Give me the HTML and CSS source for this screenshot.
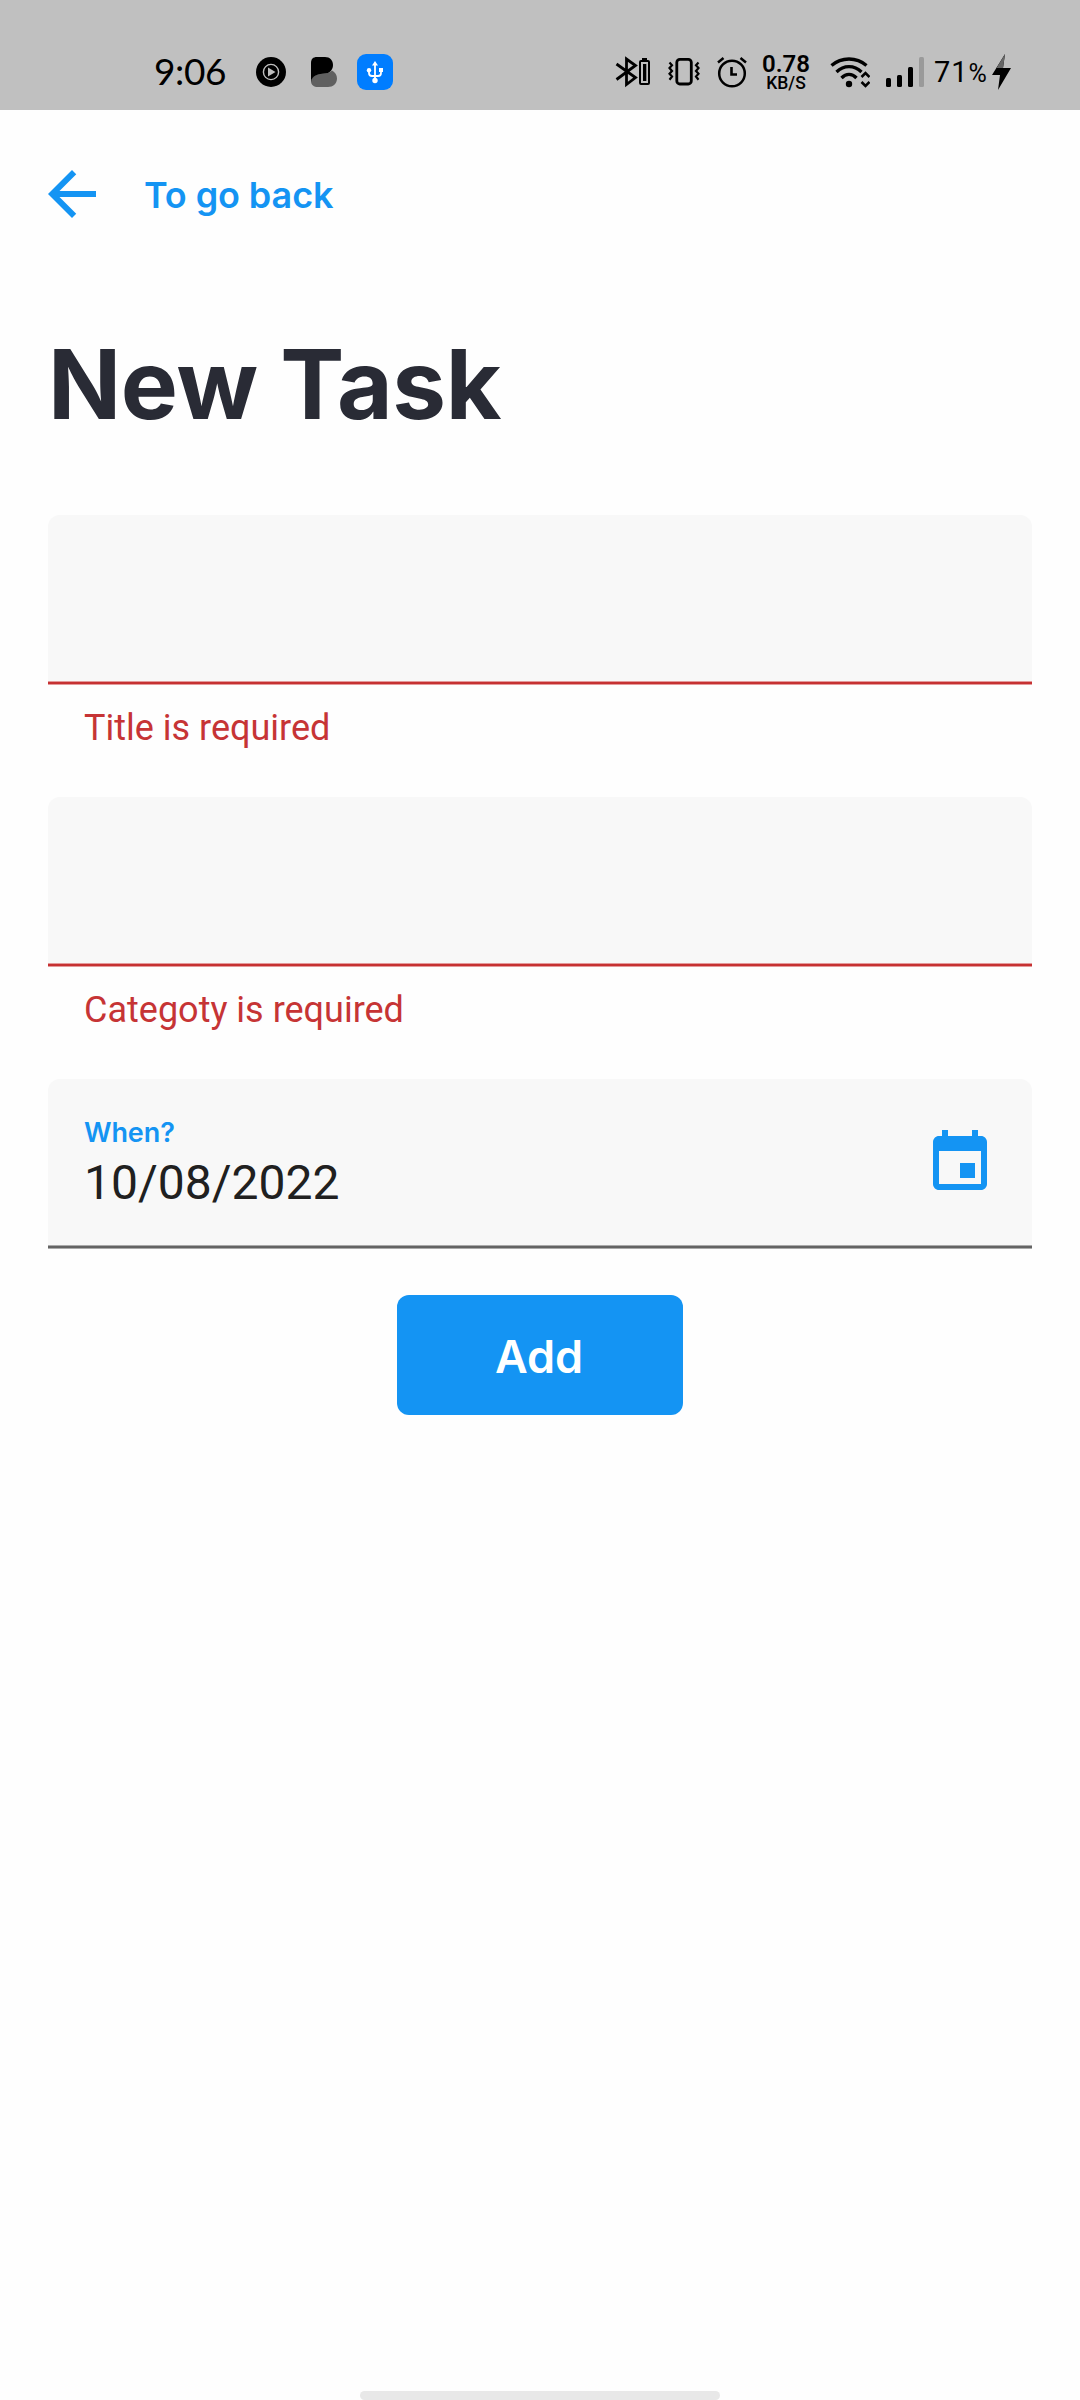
FILE: index.html
```html
<!DOCTYPE html>
<html lang="en">
<head>
<meta charset="utf-8">
<title>New Task</title>
<link rel="stylesheet" href="styles.css">
</head>
<body>
<div class="screen">
  <header class="status">
    <div class="status-left">
      <span class="clock">9:06</span>
      <svg class="icon-play" width="30" height="30" viewBox="0 0 30 30"><circle cx="15" cy="15" r="15"/><circle cx="15" cy="15" r="7.6" fill="none" stroke="#c0c0c0" stroke-width="1.4"/><path d="M12 10.5v9l7.5-4.5z" fill="#c0c0c0"/></svg>
      <svg class="icon-b" width="26" height="30" viewBox="0 0 26 30"><path d="M0 24C1 17 9 17 14 16.500C18 16 20 14.500 21 13.500C24 15 26 18 26 21.500C26 26.500 22 30 17 30H7C3 30 0 28 0 24z" fill="#606060"/><path d="M0 25V6C0 2 2 0 6 0H14C19 0 22 3.500 22 8C22 13.500 18 16.300 14 16.600C8 17 1 18 0 25z"/></svg>
      <svg width="36" height="36" viewBox="0 0 36 36"><rect width="36" height="36" rx="9" fill="#007dff"/><g fill="none" stroke="#fff" stroke-width="1.800"><path d="M18 9V26M12 17V19Q12 22 15 22H21Q24 22 24 19V17"/></g><path d="M18 7l3 4.500h-6z" fill="#fff"/><circle cx="12" cy="16.300" r="2.200" fill="#fff"/><path d="M22 14h4v4h-4z" fill="#fff"/><circle cx="18" cy="26.500" r="2.700" fill="#fff"/></svg>
    </div>
    <div class="status-right">
      <svg class="icon-bt" width="36" height="32" viewBox="0 0 36 32"><path d="M1.500 8L20.500 21.500L11.500 28.500V3L20.500 9.500L1.500 23.500" fill="none" stroke="#000" stroke-width="2.800"/><rect x="25" y="5" width="9" height="23" rx="1" fill="none" stroke="#000" stroke-width="2"/><path d="M27 2h5v3h-5zM28 8h3.300v17H28z"/></svg>
      <svg class="icon-vib" width="32" height="30" viewBox="0 0 32 30"><rect x="8.800" y="2.300" width="14.500" height="24.700" rx="3" fill="none" stroke="#000" stroke-width="2.800"/><path d="M1.500 5.500l2.500 2.800l-2.500 2.800l2.500 2.800l-2.500 2.800l2.500 2.800l-2.500 3.200M30.500 5.500l-2.500 2.800l2.500 2.800l-2.500 2.800l2.500 2.800l-2.500 2.800l2.500 3.200" fill="none" stroke="#000" stroke-width="2.200"/></svg>
      <svg class="icon-alarm" width="30" height="32" viewBox="0 0 30 32"><g fill="none" stroke="#000" stroke-width="2.500"><circle cx="15" cy="16.500" r="12.800"/><path d="M1 5.500L6.500 1M29 5.500L23.500 1"/><path d="M14.500 10V17.500H20" stroke-width="2.600"/></g></svg>
      <div class="speed"><span class="speed-value">0.78</span><span class="speed-unit">KB/S</span></div>
      <svg class="icon-wifi" width="40" height="32" viewBox="0 0 40 32"><g fill="none" stroke="#000" stroke-width="3.300"><path d="M1.500 9.500Q9 3 19 3T36.500 9.500"/><path d="M6.500 16Q12 10.600 19 10.600T31.500 16"/><path d="M11.500 22Q15 18.300 19 18.300T26.500 22"/></g><circle cx="19" cy="28" r="3.200"/><path d="M31.500 21l4-4l4 4M31.500 26l4 4l4-4" fill="none" stroke="#000" stroke-width="2.600"/></svg>
      <svg class="icon-signal" width="38" height="30" viewBox="0 0 38 30"><rect x="0" y="21" width="5" height="9" rx="1.500"/><rect x="11" y="18" width="5" height="12" rx="1.500"/><rect x="22" y="10" width="5" height="20" rx="1.500"/><rect x="33" y="0" width="5" height="30" rx="1.500" fill="#9a9a9a"/></svg>
      <span class="battery">71<span class="percent">%</span></span>
      <svg class="icon-bolt" width="19" height="36" viewBox="0 0 19 36"><path d="M13 0L0 21H8L6 36L19 14H11z"/><path d="M13 0L4.500 14H11z" fill="#666"/></svg>
    </div>
  </header>
  <main class="page">
    <nav class="back">
      <svg width="48" height="48" viewBox="4 4 16 16"><path fill="#1494f3" d="M20 11H7.830l5.590-5.590L12 4l-8 8 8 8 1.410-1.410L7.830 13H20v-2z"/></svg>
      <span class="back-label">To go back</span>
    </nav>
    <h1 class="title">New Task</h1>
    <form class="form">
      <div class="field invalid"></div>
      <p class="error">Title is required</p>
      <div class="field invalid"></div>
      <p class="error">Categoty is required</p>
      <div class="field">
        <div class="value-group">
          <span class="label">When?</span>
          <span class="value">10/08/2022</span>
        </div>
        <svg class="calendar" width="72" height="72" viewBox="0 0 24 24"><path fill="#1494f3" d="M17 12h-5v5h5v-5zM16 1v2H8V1H6v2H5c-1.110 0-1.990.9-1.990 2L3 19c0 1.100.89 2 2 2h14c1.100 0 2-.9 2-2V5c0-1.100-.9-2-2-2h-1V1h-2zm3 18H5V8h14v11z"/></svg>
      </div>
      <button class="add" type="button">Add</button>
    </form>
  </main>
  <div class="home-indicator"></div>
</div>
</body>
</html>
```
FILE: styles.css
```css
* { box-sizing: border-box; }
body { margin: 0; background: #fefefe; }
svg { display: block; flex: none; }
.screen { width: 1080px; height: 2400px; display: flex; flex-direction: column; align-items: center; background: #fefefe; }

.status { width: 100%; height: 110px; padding: 0 69px 0 154px; background: #c0c0c0; display: flex; justify-content: space-between; font-family: Roboto, sans-serif; color: #000; }
.status-left, .status-right { display: flex; align-items: flex-start; white-space: nowrap; padding-top: 54px; }
.clock { width: 102px; margin-top: -1px; font: 400 37px/35px Lato, sans-serif; letter-spacing: -0.4px; }
.icon-play { margin: 3px 25px 0 0; }
.icon-b { margin: 3px 20px 0 0; }
.icon-bt { margin: 2px 17px 0 0; }
.icon-vib { margin: 3px 17px 0 0; }
.icon-alarm { margin: 3px 14px 0 0; }
.speed { width: 50px; display: flex; flex-direction: column; align-items: center; font-weight: 600; }
.speed-value { font-size: 24px; line-height: 20px; }
.speed-unit { font-size: 17.5px; font-weight: 500; line-height: 18px; }
.icon-wifi { margin: 2px 16px 0 19px; }
.icon-signal { margin: 3px 10px 0 0; }
.battery { width: 54px; margin-right: 4px; font-size: 29px; line-height: 36px; letter-spacing: 1px; }
.percent { font-size: 25px; letter-spacing: 0; }

.page { width: 100%; flex: 1; padding: 60px 48px 0; display: flex; flex-direction: column; }
.back { display: flex; align-items: center; gap: 48px; height: 48px; }
.back-label { font: 600 36px/48px Inter, sans-serif; letter-spacing: -0.1px; color: #1494f3; padding-top: 1px; }
.title { margin: 106px 0 0; height: 120px; font: 700 96px/120px Inter, sans-serif; letter-spacing: -0.3px; color: #292b35; white-space: nowrap; }
.form { margin-top: 71px; display: flex; flex-direction: column; }
.field { height: 170px; padding: 34px 36px 0; display: flex; justify-content: space-between; background: linear-gradient(#aaa 1px, #646464 1px, #646464 3px, #aaa 3px) bottom / 100% 4px no-repeat #f8f8f8; border-radius: 12px 12px 0 0; }
.invalid { background: linear-gradient(#e49a9b 1px, #c63132 1px, #c63132 3px, #e49a9b 3px) bottom / 100% 4px no-repeat #f8f8f8; }
.error { margin: 0; height: 112px; padding: 22px 36px 0; font: 400 36px/42px Roboto, sans-serif; color: #c63435; }
.value-group { display: flex; flex-direction: column; }
.label { font: 600 27px/40px Inter, sans-serif; letter-spacing: -0.1px; color: #1494f3; }
.value { font: 400 48px/60px Roboto, sans-serif; color: #202020; }
.calendar { margin-top: 14px; }
.add { align-self: center; width: 286px; height: 120px; margin-top: 46px; padding: 4px 2px 0 0; border: 0; border-radius: 12px; background: #1494f3; color: #fff; font: 600 45px/54px Inter, sans-serif; }
.home-indicator { width: 360px; height: 9px; border-radius: 5px; background: #e8e8e8; }
```
